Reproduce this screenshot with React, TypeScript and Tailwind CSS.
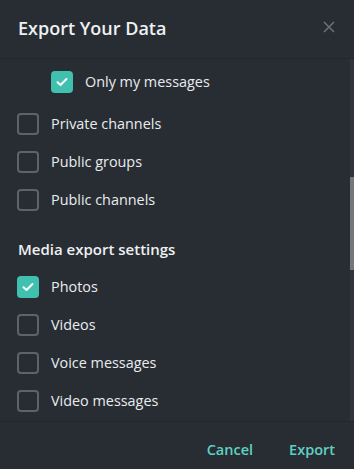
import React from "react";

const Check = ({ checked }: { checked?: boolean }) =>
  checked ? (
    <div className="w-[22px] h-[22px] rounded-[4px] bg-[#40c1b0] flex items-center justify-center">
      <svg width="12" height="10" viewBox="0 0 12 10" fill="none">
        <path d="M1.5 5.2L4.5 8L10.5 2" stroke="#fff" strokeWidth="2" strokeLinecap="round" strokeLinejoin="round" />
      </svg>
    </div>
  ) : (
    <div className="w-[22px] h-[22px] rounded-[4px] border-2 border-[#5f6367]" />
  );

const Row = ({ label, checked, indent }: { label: string; checked?: boolean; indent?: boolean }) => (
  <div className={`h-[38px] flex items-center gap-[12px] ${indent ? "pl-[51px]" : "pl-[17px]"}`}>
    <Check checked={checked} />
    <span className="text-[14.4px] text-[#e9ecee]">{label}</span>
  </div>
);

export default function App() {
  return (
    <div
      className="w-[354px] h-[469px] bg-[#282d33] flex flex-col overflow-hidden"
      style={{ fontFamily: '"Open Sans", sans-serif' }}
    >
      <div className="h-[59px] flex items-center justify-between pl-[18px] pr-[19px] border-b border-[#23272c]">
        <span className="text-[18px] font-semibold text-[#eef0f2] -mt-[1px]">Export Your Data</span>
        <svg width="12" height="12" viewBox="0 0 12 12" className="-mt-[4px]">
          <path d="M1 1L11 11M11 1L1 11" stroke="#6b7075" strokeWidth="1.6" />
        </svg>
      </div>

      <div className="relative flex-1 overflow-hidden border-b border-[#23272c]">
        <div className="pt-[4px]">
          <Row label="Only my messages" checked indent />
          <div className="h-[4px]" />
          <Row label="Private channels" />
          <Row label="Public groups" />
          <Row label="Public channels" />
          <div className="h-[49px] pt-[11px] flex items-center pl-[18px]">
            <span className="text-[15px] font-semibold text-[#eef0f2]">Media export settings</span>
          </div>
          <Row label="Photos" checked />
          <Row label="Videos" />
          <Row label="Voice messages" />
          <Row label="Video messages" />
        </div>
        <div className="absolute right-0 top-0 bottom-0 w-[4px] bg-[#30353b]">
          <div className="absolute left-0 right-0 top-[118px] h-[93px] bg-[#74777b]" />
        </div>
      </div>

      <div className="h-[47px] flex items-center justify-end gap-[36px] pr-[19px] pt-[8px]">
        <span className="text-[14.5px] font-semibold text-[#5fd1c3]">Cancel</span>
        <span className="text-[14.5px] font-semibold text-[#5fd1c3]">Export</span>
      </div>
    </div>
  );
}
